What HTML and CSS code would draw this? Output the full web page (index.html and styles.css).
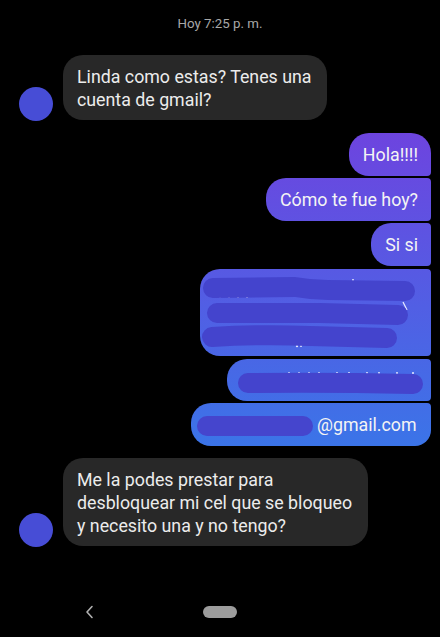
FILE: index.html
```html
<!DOCTYPE html>
<html lang="es">
<head>
<meta charset="utf-8">
<title>Chat</title>
<link rel="stylesheet" href="styles.css">
</head>
<body>
<div class="screen">
  <div class="time">Hoy 7:25 p. m.</div>

  <div class="row-in first">
    <div class="avatar"></div>
    <div class="bubble-in">Linda como estas? Tenes una<br>cuenta de gmail?</div>
  </div>

  <div class="sent-group">
    <div class="bubble-out top">Hola!!!!</div>
    <div class="bubble-out mid">Cómo te fue hoy?</div>
    <div class="bubble-out mid">Si si</div>
    <div class="bubble-out mid redacted big">
      <svg class="scribble" width="231" height="87" viewBox="0 0 231 87">
        <g class="flecks">
          <circle cx="20" cy="28" r="1"/><circle cx="29" cy="28" r="1"/><circle cx="38" cy="28" r="1"/><circle cx="47" cy="28" r="1"/>
          <circle cx="153" cy="11" r="1"/><circle cx="182" cy="37" r="1"/><circle cx="112" cy="53" r="1"/>
          <circle cx="147" cy="59" r="1"/><circle cx="97" cy="77" r="1.2"/><circle cx="101" cy="77" r="1"/>
          <path d="M203 33 L207 41"/>
        </g>
        <path class="ink" d="M13 19 L95 18 Q112 21 128 21 L205 22" />
        <path class="ink" d="M17 44 L120 44 Q160 45 198 46" />
        <path class="ink" d="M12 68 Q60 65 110 67 L187 69" />
      </svg>
    </div>
    <div class="bubble-out mid redacted medium">
      <svg class="scribble" width="204" height="42" viewBox="0 0 204 42">
        <g class="flecks">
          <circle cx="62" cy="14" r="1"/><circle cx="72" cy="14" r="1"/><circle cx="82" cy="14" r="1"/><circle cx="92" cy="14" r="1"/>
          <circle cx="110" cy="14" r="1"/><circle cx="122" cy="14" r="1"/><circle cx="140" cy="14" r="1"/><circle cx="152" cy="14" r="1"/>
          <circle cx="170" cy="14" r="1"/><circle cx="186" cy="14" r="1"/>
        </g>
        <path class="ink" d="M21 24 Q100 23 186 25" />
      </svg>
    </div>
    <div class="bubble-out bottom mail">
      <span class="mark"></span><span>@gmail.com</span>
    </div>
  </div>

  <div class="row-in second">
    <div class="avatar"></div>
    <div class="bubble-in">Me la podes prestar para<br>desbloquear mi cel que se bloqueo<br>y necesito una y no tengo?</div>
  </div>

  <div class="navbar">
    <svg class="back" width="10" height="14" viewBox="0 0 10 14">
      <path d="M7 1.5 L2 7 L7 12.5" />
    </svg>
    <div class="pill"></div>
  </div>
</div>
</body>
</html>
```

FILE: styles.css
```css
* { box-sizing: border-box; }

html, body {
  margin: 0;
  padding: 0;
  background: #000;
}

.screen {
  width: 440px;
  height: 637px;
  display: flex;
  flex-direction: column;
  font-family: Roboto, "Liberation Sans", sans-serif;
  color: #ececec;
  overflow: hidden;
}

.time {
  margin-top: 16px;
  height: 16px;
  line-height: 16px;
  font-size: 13.3px;
  color: #a8a8a8;
  text-align: center;
}

.row-in {
  display: flex;
  align-items: flex-end;
  padding-left: 19px;
}

.row-in.first { margin-top: 23px; }
.row-in.second { margin-top: 12px; }

.avatar {
  width: 34px;
  height: 34px;
  border-radius: 50%;
  background: #474dd6;
  flex: none;
  margin-bottom: -1px;
}

.bubble-in {
  margin-left: 10px;
  background: #282828;
  border-radius: 20px;
  padding: 10px 16px 9px 14px;
  font-size: 17.8px;
  line-height: 23px;
  color: #ececec;
  white-space: nowrap;
}

.sent-group {
  margin-top: 13px;
  display: flex;
  flex-direction: column;
  align-items: flex-end;
  gap: 2px;
  padding-right: 9px;
}

.bubble-out {
  background: linear-gradient(180deg, #6d44df 133px, #3b74e8 445px);
  background-attachment: fixed;
  color: #f4f4f4;
  font-size: 17.8px;
  line-height: 23px;
  padding: 10px 13px 10px 14px;
  white-space: nowrap;
  border-radius: 20px 4px 4px 20px;
}

.bubble-out.top { border-radius: 20px 20px 4px 20px; }
.bubble-out.bottom { border-radius: 20px 4px 16px 20px; }

.redacted {
  padding: 0;
}

.redacted.big { width: 231px; height: 87px; margin-top: 1px; }
.redacted.medium { width: 204px; height: 42px; margin-top: 1px; }

.scribble {
  display: block;
}

.scribble .ink {
  fill: none;
  stroke: #4444cd;
  stroke-width: 20;
  stroke-linecap: round;
  stroke-linejoin: round;
}

.flecks circle {
  fill: #e8eaff;
}

.flecks path {
  fill: none;
  stroke: #e8eaff;
  stroke-width: 1.2;
}

.mail {
  display: flex;
  align-items: center;
  height: 43px;
  width: 240px;
  padding: 0 14px 0 6px;
}

.mark {
  display: inline-block;
  width: 116px;
  height: 20px;
  border-radius: 10px;
  background: #4545cd;
  margin-right: 4px;
  margin-top: 3px;
  flex: none;
}

.navbar {
  margin-top: auto;
  height: 50px;
  position: relative;
  display: flex;
  align-items: center;
  justify-content: center;
}

.back {
  position: absolute;
  left: 85px;
  top: 18px;
}

.back path {
  fill: none;
  stroke: #b0b0b0;
  stroke-width: 1.6;
  stroke-linecap: round;
  stroke-linejoin: round;
}

.pill {
  width: 34px;
  height: 12px;
  border-radius: 6px;
  background: #9c9c9c;
}
```
